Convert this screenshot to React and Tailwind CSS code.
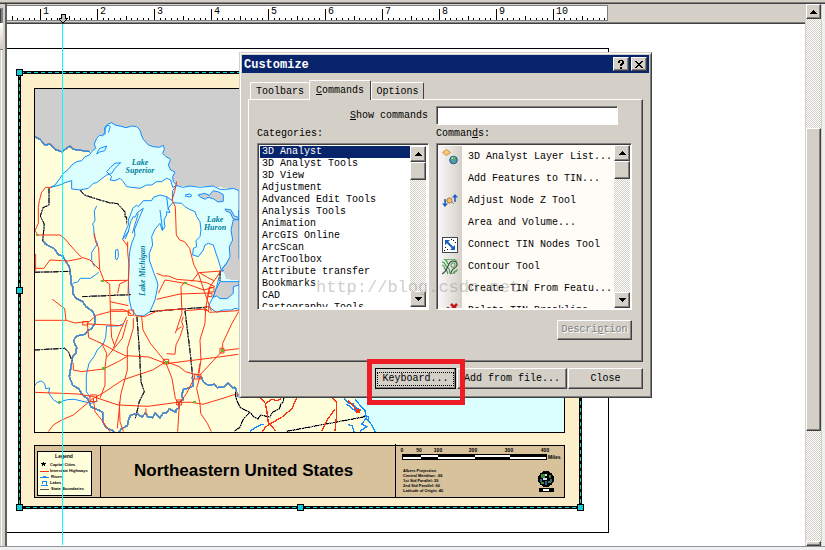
import React, { useState } from 'react';

const CATEGORIES = [
  '3D Analyst',
  '3D Analyst Tools',
  '3D View',
  'Adjustment',
  'Advanced Edit Tools',
  'Analysis Tools',
  'Animation',
  'ArcGIS Online',
  'ArcScan',
  'ArcToolbox',
  'Attribute transfer',
  'Bookmarks',
  'CAD',
  'Cartography Tools',
];

const COMMANDS = [
  { label: '3D Analyst Layer List...', icon: 'layers' },
  { label: 'Add Features to TIN...' },
  { label: 'Adjust Node Z Tool', icon: 'nodeZ' },
  { label: 'Area and Volume...' },
  { label: 'Connect TIN Nodes Tool', icon: 'connect' },
  { label: 'Contour Tool', icon: 'contour' },
  { label: 'Create TIN From Featu...' },
  { label: 'Delete TIN Breakline', icon: 'delete' },
];

const RAISED = 'bg-[#d4d0c8] border border-t-white border-l-white border-r-[#404040] border-b-[#404040] shadow-[inset_-1px_-1px_0_#808080]';
const SUNKEN = 'border border-t-[#808080] border-l-[#808080] border-r-white border-b-white shadow-[inset_1px_1px_0_#404040]';
const TRACK = 'bg-[repeating-conic-gradient(#ffffff_0_25%,#d4d0c8_0_50%)] bg-[length:2px_2px]';

function ArrowButton({ down = false, label, className = '' }) {
  return (
    <button type="button" aria-label={label} className={`${RAISED} ${className} flex shrink-0 items-center justify-center`}>
      <svg width="7" height="4" viewBox="0 0 7 4" shapeRendering="crispEdges">
        <path d={down ? 'M0 0h7v1H6v1H5v1H4v1H3V3H2V2H1V1H0z' : 'M3 0h1v1h1v1h1v1h1v1H0V3h1V2h1V1h1z'} />
      </svg>
    </button>
  );
}

function ListScroll() {
  return (
    <div className={`flex w-4 shrink-0 flex-col ${TRACK}`}>
      <ArrowButton label="Scroll up" className="h-4 w-4" />
      <div className={`h-[18px] ${RAISED}`} />
      <div className="flex-1" />
      <ArrowButton down label="Scroll down" className="h-4 w-4" />
    </div>
  );
}

function CommandIcon({ name }) {
  if (name === 'layers') {
    return (
      <svg width="16" height="16" viewBox="0 0 16 16">
        <path d="M0.500 3.500l4-3 4 3-4 3z" fill="#f9c870" stroke="#c9923a" />
        <circle cx="11.500" cy="11" r="3.800" fill="#4a92c8" stroke="#235a84" />
        <path d="M9 10c1-3 4-3 5-1l-2 2 1 3c-2 0-2-3-4-4z" fill="#62b14d" />
        <path d="M9 9l2-1v2z" fill="#d6ecf6" />
      </svg>
    );
  }
  if (name === 'nodeZ') {
    return (
      <svg width="16" height="16" viewBox="0 0 16 16">
        <path d="M3 9l4-3 5 5" fill="none" stroke="#8e8e8e" />
        <circle cx="7.500" cy="7.500" r="2.600" fill="#f4bd6c" stroke="#b9782c" />
        <path d="M3 6v5M13 9V4" stroke="#1c5fc4" strokeWidth="1.600" />
        <path d="M0 10.500h6l-3 3.500zM10 4.500h6L13 1z" fill="#1c5fc4" />
      </svg>
    );
  }
  if (name === 'connect') {
    return (
      <svg width="16" height="16" viewBox="0 0 16 16">
        <rect x=".5" y=".5" width="15" height="15" fill="#fff" stroke="#3d4655" />
        <path d="M4 4l8 8" stroke="#1d5bbb" strokeWidth="2" />
        <path d="M3 3h5L3 8zM13 13H8l5-5z" fill="#1d5bbb" />
        <path d="M11 3h1v1h-1zM13 5h1v1h-1zM3 10h1v1H3zM2 13h1v1H2zM5 12h1v1H5zM9 2h1v1H9z" />
      </svg>
    );
  }
  if (name === 'contour') {
    return (
      <svg width="16" height="16" viewBox="0 0 16 16" fill="none" strokeWidth="1.200">
        <path d="M0 3c4 0 3 5 6 6s0 5 3 6M0 6c3 0 2 4 4 5s1 3 2 4M2 0c4 1 2 5 5 5M12 15c0-3 3-2 3-4" stroke="#3f9c48" />
        <path d="M0 15c4-2 5-6 7-10 2-5 9-3 8 1-1 5-6 2-6 9" stroke="#45484c" />
        <path d="M9 7c0-4 4-4 4-1s-3 3-4 1zM4 1c3-1 7-2 11 1M11 15c0-4 4-2 4-5" stroke="#5cb35a" />
      </svg>
    );
  }
  return (
    <svg width="16" height="16" viewBox="0 0 16 16">
      <path d="M1 8l5-4 4 3" fill="none" stroke="#555" />
      <path d="M9 1l6 6M15 1L9 7" stroke="#c51616" strokeWidth="2.500" />
    </svg>
  );
}

function Ruler() {
  const ticks = Array.from({ length: 105 }, (_, i) => i - 5);
  return (
    <div className="h-[20px] shrink-0 border-b border-[#404040] bg-[#d4d0c8] shadow-[inset_0_-1px_0_#808080]">
      <svg width="602" height="17" viewBox="7 4 602 17" shapeRendering="crispEdges" aria-label="Ruler" className="relative block overflow-visible">
        <rect x="7" y="5" width="601" height="16" fill="#fff" />
        <path d="M7 5.500h601M607.500 5v15.500H7" fill="none" stroke="#808080" />
        {ticks.map((t) => {
          const x = Math.round(41 + t * 5.7) - 0.5;
          const top = t % 10 === 0 ? 9 : t % 5 === 0 ? 16 : 18;
          return <path key={t} d={`M${x} ${top}V20`} stroke="#000" />;
        })}
        {Array.from({ length: 10 }, (_, i) => (
          <text key={i} x={43 + i * 57} y="14" fontSize="10" className="font-['Liberation_Mono',monospace]">{i + 1}</text>
        ))}
        <path d="M61 14h4v4h2v1l-3 3h-2l-3-3v-1h2z" fill="#c0c0c0" stroke="#000" />
      </svg>
    </div>
  );
}

// Coordinates inside the map group are thirds of a pixel.
const WATER = [
  'M152 172L165 165 178 148 190 130 205 118 215 105 230 95 245 92 255 80 268 75 275 65 287 55 283 42 290 25 300 15 308 18 315 5 314-8 325-18 335-22 345-15 360-12 378-7 395-12 410-10 420 0 424 15 430 28 445 45 460 50 478 52 490 46 493 58 488 70 498 80 512 88 505 105 512 120 525 126 518 140 520 155 532 167 548 172 570 168 600 172 640 168 660 178 680 178 700 175 717 182 717 320 690 385 664 420 655 390 648 370 640 345 625 340 615 345 610 360 595 380 578 375 580 355 590 350 588 332 600 320 603 300 600 275 590 260 585 245 568 238 555 230 545 220 518 218 505 235 510 248 500 245 500 255 492 270 495 290 487 302 480 280 465 298 455 320 458 345 448 370 448 390 455 410 462 430 470 450 474 465 465 510 450 545 430 558 410 557 395 540 388 510 385 450 388 380 390 360 395 340 405 315 403 300 415 270 430 235 412 248 405 262 400 260 392 275 385 305 368 328 378 300 385 285 385 270 395 245 398 235 410 225 415 230 430 212 455 212 460 202 480 195 500 200 517 212 518 182 530 167 518 172 512 150 500 145 485 155 470 155 455 165 440 165 420 175 395 172 380 170 370 155 360 145 345 152 330 150 335 140 320 125 332 112 345 100 362 98 345 115 335 130 320 135 290 158 280 160 265 175 240 180 215 177 215 152 195 158 180 165z',
  'M662 422L717 440V538L705 535 695 540 670 540 650 547 625 530 632 515 640 500 650 470z',
];

const ROADS = [
  'M155 172l-18 0-12 15-7 25-3 20v48l-10 22 10 15M108 315h72l15 12 30 35 20 20 25 8 28 28M104 415h28l18-25 55 3 40-8M107 372v50',
  'M283 310l5 28 8 15 3 65 12 32 18 12 3 110 3 50 10 28M302 452l80-1M383 335v30l4 40-3 90M368 328l15 20M384 450l-25 12-6 28',
  'M530 155l-6 30-8 25 10 20 3 85 10 15 15 5 15 20 12 48 15 30 20 60 18 50M598 428l65-5M663 423l-35 50-10 58M470 430l20 8 15 0 25 10 60 5 30 5 25 12M475 490l20-40 60 10M555 455l-12 15 3 80-20 60M556 460l55 20 30-8M575 455l22-28 25 15 20 10',
  'M104 571h95l25 8 45-5 20-18 45-12h45l15 8M404 557l30 3 40-18 80-5M157 508l37 28 4 35M262 578l4 45 40 18 40 22 30 14 70 4 52 20 160-20 57-8M265 582l100 5',
  'M470 508l70-16 90-3M330 515l55 12M330 540l40-1 20 8M380 560l-20 45-20 50M400 565v30l-18 60 0 65-20 75-10 100M382 570l-15 55-45 55M425 560l4 40 22 40 45 55 20 50 10 60 12 20-5 80M498 695l-40 25-90 30-60 40-28 15',
  'M550 560l-5 15 5 15-10 30-12 25-3 28-25-2M555 542l63-5 10 10 89-5M617 535l-2 45-15 50 3 60-6 40M598 737l70-75M668 655v-15l28-60 20-35M498 695l40 15 18 15 42 12M545 590l-15 10M668 662l49-6M600 700l-5 30',
  'M104 787l130 5 45 8 75 25 90 4 90-12 40 0 35 6 60-18 30-10 18-2M280 805l-60 50-35 15-25 15-15 20M280 805l5 40 20 25 25 35M305 640l15 30-5 45 0 50-15 40M220 700v20l25 5 65-8 45-22 25-15',
  'M600 740l-10 35 10 45 2 30 20 30 12 25M585 740l-25 50-25 35M358 815l2 60 10 30M438 835v20M530 810h15v15h-15zM583 733h20v14h-20zM270 795h20v20h-20zM385 540h16v16h-16zM490 688h16v14h-16zM660 655h12v14h-12zM614 530h12v12h-12zM248 575h16v10h-16zM628 472h14v14h-14zM624 490h12v10h-12z',
];

const RIVERS = [
  'M128 330l8 12 27 14 12 18 13 4 12 20 8 12 5 35 0 15 5 10 0 20 10 15 20 10 10 15 20 14 8 18-2 20-10 15-10 4-8 12-25 5-10 12 3 12 6 10-2 18-10 10-10 60 10 26 18 10 12 20 15 10 10 25 20 8 15 8v28l10 18 22 10 10 16 12 8 3 15',
  'M104 767l8-10 12-4 10 8 3 15 12-2-3 15 14 20 18 12 10-8 15-4 20-1 50 12 20-7',
  'M218 460l15-4 8-11h30l15-10 10-8M290 228l-7 14 2 30-7 10 3 10 2 30 10 20-8 10-10 15 0 25 8 18M347 360l6-2 2 10v12l-5 10-4-6zM372 580l-17 8h-35l-3 34-7 20-18 18-10 20-15 20-8 35v50l10 15',
  'M577 740l3 28-12 6-18 4-5 20 6 10-14 8 1 18-10 5v8l-20-10-8 12-10 0-10 15-14-15-8 14-14-2-8-12-10 12-15-10-18 4-6 10-5 22-18 10-8 10M590 740l15 2 5 14 15 10 18-3 8 10 20-2 12-12 15 15 8-2 8 30',
  'M290 72l8-16 22-8-6 14-15 4zM500 200l5 40M315 15l0-18 8-12 8 5-6 18M387 300l-12 28M415 250l-18 60M555 195l15-3 6 5-6 4-15-3M480 240l8 60',
];

const BORDERS = [
  'M147 175v50l-18 8-8 25 12 25-5 50',
  'M241 181l12 14 40 13 35 10 25 3 22 25v15l5 0v22',
  'M104 427l107-3M247 500l145-6M104 660l90-5 12 12 10 25M411 560l8 115 4 80 10 30-15 30-7 30-5 20M450 545l95-8 75-5M555 542l15 120 8 78M660 422v30',
];

function GreatLakesMap() {
  return (
    <g shapeRendering="crispEdges">
      <rect x="34" y="88" width="531" height="345" fill="#ffffdc" />
      <svg x="35" y="89" width="529" height="344" viewBox="35 89 529 344">
        <g transform="translate(0 130) scale(.3333)" fill="none" strokeLinejoin="bevel">
          <path d="M104-130H760V450H700L665 420 690 385 698 280 675 237 717 265V182L640 168 532 167 480 128 400 60 300 60 260 65 220 58 210 48 185 65 165 58 150 42 135 45 120 28 104 20z" fill="#cecece" />
          {WATER.map((d) => <path key={d} d={d} fill="#dbffff" stroke="#108cff" strokeWidth="3" />)}
          <path d="M717 240V430L690 425 664 420 680 400 690 380 688 350 698 330 693 300 700 270 717 268zM675 237l18 3 10 18 12 4v8l-16-4-8-18-12-4zM594 195l20-5 14 6 12-14 16 4 14 8v20l-16 2-14-10-16-4-8 6-14-6zM660 455h57v10l-17 5 0 20-18 16-22 0-10-8-10 4 8-24z" fill="#cecece" stroke="#108cff" strokeWidth="3" />
          <path d="M670 424L717 385V450L680 448z" fill="#cecece" />
          <path d="M104 20l16 8 15 17 15-3 15 16 20 7 25-17 10 10 50 7" stroke="#999" strokeWidth="6" />
          <path d="M104 20l16 8 15 17 15-3 15 16 20 7 25-17 10 10 50 7" stroke="#108cff" strokeWidth="3" />
          <path d={RIVERS[0]} stroke="#999" strokeWidth="6" />
          <path d={RIVERS[3]} stroke="#999" strokeWidth="6" />
          {RIVERS.map((d) => <path key={d} d={d} stroke="#108cff" strokeWidth="3" />)}
          {BORDERS.map((d) => (
            <g key={d}>
              <path d={d} stroke="#aaa" strokeWidth="5" />
              <path d={d} stroke="#000" strokeWidth="3" strokeDasharray="16 4 4 4" />
            </g>
          ))}
          {ROADS.map((d) => <path key={d} d={d} stroke="#ff3110" strokeWidth="3" />)}
          <path d="M107 311h8v7h-8zM303 449h8v7h-8zM553 455h9v7h-9zM305 711h9v8h-9zM494 693h9v8h-9zM662 657h9v8h-9zM174 812h9v8h-9zM578 812h9v8h-9z" fill="#6cb52d" />
        </g>
        {/* Atlantic coast, south-east corner */}
        <path d="M350 390L358 402 365 412 367 420 376 433H565V390z" fill="#dbffff" />
        <g transform="translate(220 394) scale(.3333)" fill="none">
          <path d="M372 14l14 14 12 0 10 14 15 6M380 30l30 24M405 15l20 25 10 10 5 25 14 16 12 22M385 92l12 4 5 18M440 72l-16 18 16 8-20 14M432 65l14 4v12M90 112l20-14 20-8" stroke="#108cff" strokeWidth="4" />
          <path d="M48-7l0 20 12 27 30 15 12 14 12 6 8-12 28 6 8-14 20-10 4-14 8-8 4-30M90 55l-20 20-10 25-18 12M200 112l150-28 85-16" stroke="#aaa" strokeWidth="5" />
          <path d="M48-7l0 20 12 27 30 15 12 14 12 6 8-12 28 6 8-14 20-10 4-14 8-8 4-30M90 55l-20 20-10 25-18 12M200 112l150-28 85-16" stroke="#000" strokeWidth="3" strokeDasharray="16 4 4 4" />
          <path d="M122 12l14 16 4 20 5 40 12 10 10 14M136 30l18-14 18 4 10-6M230 12l-15 33-30 25-35 20-15 10-8 14M338 12l12 14v34l-5 52M345 45l-25 35-15 32M385 20l25 28h8v6h-10" stroke="#ff3110" strokeWidth="4" />
        </g>
      </svg>
      <rect x="34.500" y="88.500" width="530" height="344" fill="none" stroke="#000" />
      <g className="font-['Liberation_Serif',serif] font-bold italic" fontSize="8" fill="#007f9c">
        <text x="140" y="165" textAnchor="middle">Lake</text>
        <text x="140" y="173" textAnchor="middle">Superior</text>
        <text x="215" y="222" textAnchor="middle">Lake</text>
        <text x="215" y="230" textAnchor="middle">Huron</text>
        <text transform="translate(145 296) rotate(-90)">Lake Michigan</text>
      </g>
    </g>
  );
}

function MapFooter() {
  return (
    <g shapeRendering="crispEdges">
      <rect x="34.500" y="445.500" width="530" height="52" fill="#d7c29c" stroke="#000" />
      <path d="M100.500 446v51M395.500 444v53" stroke="#000" />
      <rect x="37.500" y="451.500" width="54" height="44" fill="#ffffdc" stroke="#000" />
      <path d="M40 471.500h9" stroke="#ff3110" />
      <path d="M40 477.500h9M43 476.500h3M41 485.500h7M42 484v-2.500h4v3" stroke="#108cff" fill="none" />
      <path d="M40 489.500h9" stroke="#555" />
      <path d="M43 462h1v1h2v1h-1v2h-1v-1h-1v1h-1v-2h-1v-1h2z" />
      <g className="font-['Liberation_Sans',sans-serif] font-bold" fontSize="4">
        <text x="64" y="458" textAnchor="middle" fontSize="5">Legend</text>
        <text x="50" y="466">Capital Cities</text>
        <text x="50" y="472">Interstate Highways</text>
        <text x="51" y="478">Rivers</text>
        <text x="50" y="484">Lakes</text>
        <text x="51" y="490">State Boundaries</text>
      </g>
      <g className="font-['Liberation_Sans',sans-serif] font-bold" fontSize="4">
        <text x="403" y="472">Albers Projection</text>
        <text x="403" y="477">Central Meridian: -96</text>
        <text x="403" y="482">1st Std Parallel: 20</text>
        <text x="403" y="487">2nd Std Parallel: 60</text>
        <text x="403" y="492">Latitude of Origin: 40</text>
      </g>
      <g className="font-['Liberation_Sans',sans-serif] font-bold" fontSize="5">
        <g textAnchor="middle">
          <text x="402" y="452">0</text>
          <text x="419" y="452">50</text>
          <text x="438" y="452">100</text>
          <text x="473" y="452">200</text>
          <text x="509" y="452">300</text>
          <text x="545" y="452">400</text>
        </g>
        <text x="548" y="459">Miles</text>
      </g>
      <text x="134" y="476" fontSize="17" className="font-['Liberation_Sans',sans-serif] font-bold">Northeastern United States</text>
      <path d="M402 454h145v6H402z" />
      <path d="M421 455h17v2h-17zM475 455h35v2h-35zM403 457h18v2h-18zM438 457h37v2h-37zM510 457h36v2h-36z" fill="#fff" />
      <circle cx="546" cy="479" r="8" />
      <path d="M541 474h4v4h-4zM549 475h2v3h-2zM541 482h3v2h-3zM548 481h3v2h-3z" fill="#3c8a35" />
      <path d="M540 479h2v3h-2zM545 481h2v4h-2zM550 479h2v3h-2z" fill="#30639a" />
      <path d="M545 474h2v2h-2zM543 478h4v2h-4z" fill="#cde3e9" />
      <path d="M539 488h15v4h-15z" />
      <path d="M543 489h6v2h-6z" fill="#fff" />
    </g>
  );
}

function LayoutPage() {
  const handles = [[19, 72], [19, 290], [19, 507], [300, 507], [580, 507], [300, 72], [580, 72], [580, 290]];
  return (
    <svg width="602" height="521" viewBox="7 24 602 521" className="block max-w-none" aria-label="Layout view">
      <g shapeRendering="crispEdges">
        <path d="M7 48.500h601.500v484H7" fill="none" stroke="#000" />
        <rect x="19.500" y="72.500" width="561" height="435" fill="#fff0cc" stroke="#000" strokeWidth="3" />
        <rect x="19.500" y="72.500" width="561" height="435" fill="none" stroke="#10d0d8" strokeDasharray="4 3" />
      </g>
      <GreatLakesMap />
      <MapFooter />
      <g shapeRendering="crispEdges">
        <path d="M62.500 24V545" stroke="#00ffff" />
        {handles.map(([x, y]) => (
          <rect key={`${x}-${y}`} x={x - 2.5} y={y - 2.5} width="6" height="6" fill="#10cdd5" stroke="#000" />
        ))}
      </g>
    </svg>
  );
}

function Tab({ active, onClick, className, children }) {
  return (
    <button
      type="button"
      role="tab"
      aria-selected={active}
      onClick={onClick}
      className={`rounded-t-[2px] border border-b-0 border-t-white border-l-white border-r-[#404040] bg-[#d4d0c8] ${active ? 'relative -mb-px h-5' : 'h-[17px] pt-0.5'} ${className}`}
    >
      {children}
    </button>
  );
}

function CustomizeDialog() {
  const [tab, setTab] = useState('commands');
  const [filter, setFilter] = useState('');
  const [category, setCategory] = useState(CATEGORIES[0]);

  return (
    <section
      role="dialog"
      aria-label="Customize"
      className="absolute left-[239px] top-[52px] w-[413px] border border-t-[#d4d0c8] border-l-[#d4d0c8] border-r-[#404040] border-b-[#404040] bg-[#d4d0c8] p-0.5 pb-2 shadow-[inset_1px_1px_0_#ffffff,inset_-1px_-1px_0_#808080]"
    >
      <header className="flex h-[18px] items-center bg-[#08246b] pr-0.5 pl-0.5 text-white">
        <h1 className="flex-1 pt-px text-xs font-bold">Customize</h1>
        <button type="button" aria-label="Help" className={`${RAISED} mr-0.5 flex h-[14px] w-4 items-center justify-center`}>
          <svg width="6" height="9" viewBox="0 0 6 9" shapeRendering="crispEdges">
            <path d="M1 0h4v1h1v3H5v1H4v1H2V4h1V3h1V1H2v2H0V1h1zM2 7h2v2H2z" />
          </svg>
        </button>
        <button type="button" aria-label="Close window" className={`${RAISED} flex h-[14px] w-4 items-center justify-center`}>
          <svg width="8" height="7" viewBox="0 0 8 7" shapeRendering="crispEdges">
            <path d="M0 0h2v1h1v1h2V1h1V0h2v1H7v1H6v1H5v1h1v1h1v1h1v1H6V6H5V5H3v1H2v1H0V6h1V5h1V4h1V3H2V2H1V1H0z" />
          </svg>
        </button>
      </header>

      <div className="px-[6px] pt-[7px]">
        <div role="tablist" className="flex items-end pl-0.5">
          <Tab active={tab === 'toolbars'} onClick={() => setTab('toolbars')} className="w-[59px] border-r-0">Toolbars</Tab>
          <Tab active={tab === 'commands'} onClick={() => setTab('commands')} className="w-[62px]"><u>C</u>ommands</Tab>
          <Tab active={tab === 'options'} onClick={() => setTab('options')} className="w-[53px]">Options</Tab>
        </div>

        <div className="border border-t-white border-l-white border-r-[#404040] border-b-[#404040] pt-[6px] pr-[10px] pb-[21px] pl-2 shadow-[inset_-1px_-1px_0_#808080]">
          <div className="flex items-center gap-2 pr-[14px]">
            <label htmlFor="filter" className="flex-1 text-right"><u>S</u>how commands</label>
            <input
              id="filter"
              value={filter}
              onChange={(e) => setFilter(e.target.value)}
              className={`h-[19px] w-[182px] bg-white px-1 outline-none ${SUNKEN}`}
            />
          </div>

          <div className="flex gap-[7px] pt-[3px]">
            <div className="w-[172px]">
              <h2 className="h-[15px] leading-3">Cate<u>g</u>ories:</h2>
              <div className={`flex h-[167px] bg-white p-0.5 ${SUNKEN}`}>
                <ul role="listbox" aria-label="Categories" className="flex-1 overflow-hidden">
                  {CATEGORIES.map((name) => (
                    <li
                      key={name}
                      role="option"
                      aria-selected={name === category}
                      onClick={() => setCategory(name)}
                      className={`h-3 pl-0.5 leading-3 whitespace-nowrap ${name === category ? 'bg-[#08246b] text-white' : ''}`}
                    >
                      {name}
                    </li>
                  ))}
                </ul>
                <ListScroll />
              </div>
            </div>

            <div className="min-w-0 flex-1">
              <h2 className="h-[15px] leading-3">Comman<u>d</u>s:</h2>
              <div className={`flex h-[167px] bg-[#fffcf7] p-px ${SUNKEN}`}>
                <ul role="listbox" aria-label="Commands" className="min-w-0 flex-1 overflow-hidden pt-px">
                  {COMMANDS.map(({ label, icon }) => (
                    <li key={label} role="option" aria-selected={false} className="flex h-[22px] items-center whitespace-nowrap">
                      <span className="flex h-[22px] w-6 shrink-0 items-center justify-center bg-linear-to-r from-[#fbf7f8] to-[#d4d0c8]">
                        {icon && <CommandIcon name={icon} />}
                      </span>
                      <span className="pl-[6px]">{label}</span>
                    </li>
                  ))}
                </ul>
                <ListScroll />
              </div>
            </div>
          </div>

          <div className="flex justify-end pt-[10px]">
            <button type="button" disabled className={`${RAISED} h-5 w-[75px] text-[#808080] [text-shadow:1px_1px_0_#fff]`}>
              Descri<u>p</u>tion
            </button>
          </div>
        </div>

        <div className="flex justify-end gap-px pt-[6px]">
          <button type="button" className={`${RAISED} relative h-[21px] w-[81px] outline-1 -outline-offset-1 outline-black`}>
            <span className="mx-px block border border-dotted border-black">Keyboard...</span>
            <span aria-hidden="true" className="pointer-events-none absolute -top-[10px] -right-[10px] -bottom-[17px] -left-[9px] z-10 border-[5px] border-[#ee1c24]" />
          </button>
          <button type="button" className={`${RAISED} h-[21px] w-[110px]`}>Add from file...</button>
          <button type="button" className={`${RAISED} h-[21px] w-[75px]`}>Close</button>
        </div>
      </div>

      <p className="pointer-events-none absolute top-[225px] left-[76px] text-[17px] leading-5 text-[#808080]/40">http://blog.csdn.net/</p>
    </section>
  );
}

export default function App() {
  return (
    <div className="relative flex h-screen flex-col overflow-hidden bg-[#d4d0c8] font-['Liberation_Mono',monospace] text-[10px] leading-3 text-black">
      <div className="h-1 shrink-0 border-b border-[#404040] bg-[#d4d0c8] shadow-[inset_0_-1px_0_#808080]" />

      <main className="flex min-h-0 flex-1">
        <div className="w-[7px] shrink-0 border-r-2 border-[#606060] bg-[#d4d0c8] pt-1">
          <div className="h-[15px] w-[3px] border-t border-r-2 border-[#808080] bg-[#404040]" />
          <div className="h-[27px] w-[3px] border-b border-[#808080] bg-linear-to-b from-white to-[#d4c8c8]" />
          <div className="h-full w-0.5 border-r border-white" />
        </div>

        <div className="flex min-w-0 flex-1 flex-col bg-white">
          <Ruler />
          <div className="min-h-0 flex-1 overflow-hidden">
            <LayoutPage />
          </div>
        </div>

        <div className={`flex w-4 shrink-0 flex-col border-l border-[#d4d0c8] ${TRACK}`}>
          <ArrowButton label="Scroll page up" className="h-[15px] w-full" />
          <div className="grow-[109]" />
          <div className={`grow-[302] ${RAISED}`} />
          <div className="grow-[110]" />
          <div className={`h-[5px] ${RAISED}`} />
        </div>
        <div className="w-1 shrink-0 border-l border-[#d4d0c8] bg-[#eeeeee]" />
      </main>

      <footer className="h-1 shrink-0 border-t border-[#8c969f] bg-[#f0f0f0]" />

      <CustomizeDialog />
    </div>
  );
}
